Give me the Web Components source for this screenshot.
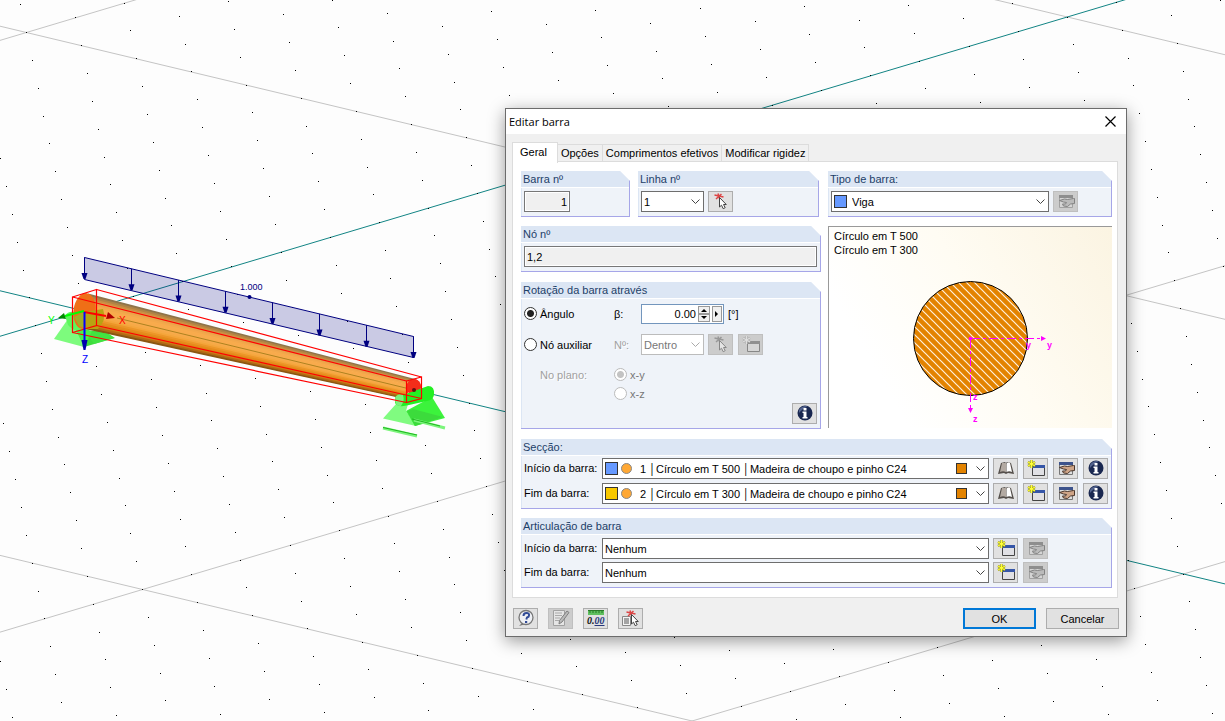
<!DOCTYPE html>
<html lang="pt">
<head>
<meta charset="utf-8">
<title>Editar barra</title>
<style>
html,body{height:100%}
body{margin:0;overflow:hidden;background:#fdfdfd;font:11px/14px "Liberation Sans",Arial,sans-serif;color:#000}
</style>
</head>
<body>
<work-plane></work-plane>
<member-dialog></member-dialog>
<script>
class BaseElement extends HTMLElement {
  render(html) {
    if (!this.shadowRoot) this.attachShadow({ mode: 'open' });
    this.shadowRoot.innerHTML = html;
  }
}

/* ---------- 3D model view ---------- */
class WorkPlane extends BaseElement {
  connectedCallback() {
    const o = [84.5, 311], a = [54.95, 13.15], b = [49.14, -14.7];
    const W = Math.max(innerWidth, 400), H = Math.max(innerHeight, 300);
    const at = (m, n) => [o[0] + m * a[0] + n * b[0], o[1] + m * a[1] + n * b[1]];
    let dots = '', lines = '';
    for (let m = -40; m <= 50; m++) for (let n = -40; n <= 50; n++) {
      const [x, y] = at(m, n);
      if (x > -1 && y > -1 && x < W && y < H) dots += `M${Math.floor(x)} ${Math.floor(y)}h1v1h-1z`;
    }
    const seg = (p, q, c) => `<path d="M${p}L${q}" stroke="${c}"/>`;
    for (const k of [-10, 10, 20]) {
      lines += seg(at(-60, k), at(60, k), '#c4c4c4') + seg(at(k, -60), at(k, 60), '#c4c4c4');
    }
    lines += seg(at(-60, 0), at(60, 0), '#128484') + seg(at(0, -60), at(0, 60), '#128484');

    const ramp = ['#8f744a','#b08445','#c98f45','#dc9a46','#eba34a','#f3a84c','#f8ab4d','#f8ab4d','#f8ab4d','#f7aa4b','#f6a945','#f4a43a','#ec9628','#e58c1c','#dd8518','#cc7a16','#b06a14','#8a5612'];
    const n = ramp.length;
    let beam = '';
    const p = (t, end) => end ? [415 - 10 * t, 379 + 20 * t] : [88 - 5 * t, 293.5 + 35 * t];
    ramp.forEach((c, i) => {
      const t = i / n, u = Math.min(1, (i + 1.6) / n);
      beam += `<path fill="${c}" d="M${p(t)}L${p(t,1)}L${p(u,1)}L${p(u)}z"/>`;
    });

    let arrows = '';
    for (let i = 0; i < 8; i++) {
      const x = 84.5 + 47 * i, y = 257.5 + 11.28 * i, e = y + 21.5;
      arrows += `<path d="M${x} ${y}V${e - 3}" stroke="#000080"/><path d="M${x - 3} ${e - 6}h6l-2 6h-2z" fill="#000080"/>`;
    }
    this.render(`<style>
      :host{display:block;position:absolute;inset:0;overflow:hidden}
      svg{display:block;width:100%;height:100%}
      text{font:10px "Liberation Sans",Arial,sans-serif}
    </style>
    <svg fill="none" aria-label="Modelo">
      ${lines}<path d="${dots}" fill="#000"/>
      <path d="M54 339L68 319L92 322L84 347z" fill="#7dfb7d"/>
      <path d="M84 347L77 330L104 331L115 338z" fill="#3ddc3d"/>
      <path d="M65 316q3-5 9-4l8 2v18q-9-1-14-7z" fill="#5cf75c"/>
      ${beam}
      <ellipse cx="84.500" cy="311" rx="11" ry="18" fill="#ef6f17" transform="rotate(8 84.500 311)"/>
      <path d="M84 312L103 309Q107 320 98 329L86 329z" fill="#b8a312"/>
      <path d="M74 317L84 312V328L79 326z" fill="#a3ae25"/>
      <path d="M84 330L109 334L114 338L94 344z" fill="#42e442" opacity=".85"/>
      <path d="M76 330L92 331L84 347z" fill="#49f349"/>
      <path d="M117 318L414 390" stroke="#ad821f"/>
      <path d="M383 418.500L396 404L409 401L406 411L416 426z" fill="#80fb80"/>
      <path d="M406 411L432 397L445 418L415 426z" fill="#3cf33c"/>
      <path d="M407 411L413 409L443 417L415 426z" fill="#3cdb3c"/>
      <ellipse cx="414" cy="387" rx="7" ry="8" fill="#f42d1a"/>
      <path d="M395 398Q397 393 403 395L428 386Q435 386 434 395Q433 400 427 401L409 405Q398 408 395 403z" fill="#23f023"/>
      <path d="M395 398Q397 393 403 395Q405 401 401 406Q395 407 395 398z" fill="#7cf07c"/>
      <path d="M407 384q3-5 8-5q6 2 6 9l-14 5z" fill="#f42d1a"/>
      <circle cx="414" cy="390" r="2" fill="#601010"/>
      <path d="M383 428L417 436M414 420L445 428" stroke="#7cf57c" stroke-width="3"/>
      <path d="M383 427.500L417 435M412 419L440 426" stroke="#20b820"/>
      <path d="M84.500 257.500L413.500 336.500V357.500L84.500 279.500z" fill="#000080" fill-opacity=".2" stroke="#000080"/>
      ${arrows}
      <circle cx="249.500" cy="297" r="2" fill="#000080"/>
      <text x="240" y="290" fill="#000080" style="font-size:9px">1.000</text>
      <g stroke="#f00" stroke-width="1.200">
        <path d="M72.500 297L96.500 289.500V325.500L72.500 332.500zM406.500 381L421.500 377V398.500L406.500 402.500z"/>
        <path d="M72.500 297L406.500 381M96.500 289.500L421.500 377M96.500 325.500L421.500 398.500M72.500 332.500L406.500 402.500"/>
      </g>
      <path d="M84 312L106 316" stroke="#f00" stroke-width="2"/><path d="M108 312L115 318L106 319z" fill="#b00000"/>
      <path d="M84 311L65 316" stroke="#0f0" stroke-width="2"/><path d="M58 318L64 313L66 319z" fill="#008c00"/>
      <path d="M84.500 312V343" stroke="#00f" stroke-width="2"/><path d="M81.500 340h6l-2 10h-2z" fill="#0000b0"/>
      <text x="119" y="324" fill="#f00">X</text>
      <text x="48" y="324" fill="#0f0">Y</text>
      <text x="82" y="363" fill="#00f">Z</text>
    </svg>`);
  }
}
customElements.define('work-plane', WorkPlane);

/* ---------- icons ---------- */
const CURSOR = '<path d="M7.500 4.500V14l2-1.800 1.700 3.500 2-1-1.700-3.200h2.800z" fill="#fff" stroke="#444"/>';
const STAR = '<path d="M2.500 2l9 2M4 6l5.500-5M6 .5l1.500 5" stroke="#dc4646" stroke-width="1.500"/>';
const ICONS = {
  pick: STAR + CURSOR,
  pickcopy: '<path d="M.5 6.500h8v9h-8z" fill="#f4f4f4" stroke="#888"/><path d="M2 9h5M2 11h5M2 13h5" stroke="#555"/><g transform="translate(2 0)">' + STAR + CURSOR + '</g>',
  create: '<path d="M5.500 6.500h12v9h-12z" fill="#e0e0e4" stroke="#444"/><path d="M5 5h13v3H5z" fill="#3656a8"/><path d="M4.500 0v8M1 2l7 4M8 2L1 6" stroke="#8b8b00" stroke-width="2.200"/><path d="M4.500 0v8M1 2l7 4M8 2L1 6" stroke="#ffff38" stroke-width="1.300"/>',
  edit: '<path d="M2.500 2.500h13v12h-13z" fill="#dedede" stroke="#777"/><path d="M2 2h14v3H2z" fill="#3d538c"/><path d="M2.500 7.500l5-1.500 3 .5 6-1h1v5l-4 .5-3 2.500-4-.5-1-2h3l1-1.500-3-.5z" fill="#cfa588" stroke="#4a362c"/>',
  book: '<path d="M1 14L4 3l4-1 1 1 1-1 4 1 3 11-6-1-2 1-2-1z" fill="#55504c"/><path d="M3 12L5 3l4 0v9q-3-1.500-6 0z" fill="#b3aaa2"/><path d="M9.500 12V3.500Q11 2 13 3l2 9q-3-1.500-5.500 0z" fill="#fff"/>',
  info: '<circle cx="9" cy="8" r="7.500" fill="#192750"/><path d="M3 5a7 7 0 0 1 9-3.500Q7 3 3 8z" fill="#6b7da8" opacity=".7"/><path d="M7.500 3h3v2.500h-3zM6.500 6.500h4V12h1v1.500h-5V12h1V8h-1z" fill="#fff"/>',
  help: '<path d="M5 13l-3 3 7-2z" fill="#777"/><circle cx="9" cy="7.500" r="7" fill="#eef0f5" stroke="#777" stroke-width="1.300"/><path d="M6.500 6q0-3 3-3t2.500 2.500q0 1.500-2 2L9.300 9.500" stroke="#304a96" stroke-width="2" fill="none"/><path d="M8 11h2.200v2H8z" fill="#304a96"/>',
  note: '<path d="M1.500.5h11v15h-11z" fill="#fff" stroke="#777"/><path d="M3 3h7M3 5.500h7M3 8h5M3 10.500h4" stroke="#888"/><path d="M15 1l2 1.500L10 12l-3 2 .5-3.500z" fill="#aaa" stroke="#333"/>',
  units: '<path d="M1 0h16v5H1z" fill="#5fc05f"/><path d="M1 .5h16M3 1v2M6 1v2M9 1v2M12 1v2M15 1v2" stroke="#287b28"/><text x="0" y="14" font-family="Liberation Serif" font-size="10" font-style="italic" font-weight="700" fill="#111">0.<tspan fill="#26377a" text-decoration="underline">00</tspan></text>'
};
class IconButton extends BaseElement {
  connectedCallback() {
    const off = this.hasAttribute('off');
    this.render(`<style>
      :host{display:block;flex:none;width:25px;height:21px}
      button{display:flex;align-items:center;justify-content:center;width:100%;height:100%;padding:0;margin:0;background:#e1e1e1;border:1px solid #adadad;border-radius:0}
      button:disabled{background:#ccc;border-color:#bfbfbf}
      button:disabled svg{filter:grayscale(1);opacity:.5}
      svg{width:18px;height:17px;overflow:visible}
    </style><button type="button" ${off ? 'disabled' : ''} aria-label="${this.getAttribute('label')}"><svg viewBox="0 0 18 17" fill="none">${ICONS[this.getAttribute('icon')]}</svg></button>`);
  }
}
customElements.define('icon-button', IconButton);

/* ---------- drop-down, optionally with a leading label and colour marks ---------- */
class ComboField extends BaseElement {
  connectedCallback() {
    const g = k => this.getAttribute(k), has = k => this.hasAttribute(k);
    this.render(`<style>
      :host{display:flex;flex:1;min-width:0;height:21px}
      label{flex:none;width:78px;line-height:20px}
      .box{position:relative;flex:1;min-width:0}
      select{appearance:none;box-sizing:border-box;width:100%;height:21px;margin:0;padding:0 20px 0 2px;border:1px solid #6e6e6e;border-radius:0;background:#fff;color:#000;font:inherit}
      :host([swatch]) select{padding-left:20px}
      :host([dot]) select{padding-left:37px}
      select:disabled{border-color:#bcbcbc;color:#777;opacity:1}
      svg,i{position:absolute;pointer-events:none}
      svg{right:4px;top:7px;width:9px;height:7px}
      i{box-sizing:border-box;top:4px;height:13px;width:13px;border:1px solid #333}
      .swatch{left:3px}.dot{left:19px;top:5px;width:11px;height:11px;border-color:#888;border-radius:50%;background:#ffa834}
      .end{right:22px;top:5px;width:11px;height:11px;background:#e38300}
    </style>
    ${has('label') ? `<label for="s">${g('label')}</label>` : ''}
    <div class="box"><select id="s" ${has('label') ? '' : `aria-label="${g('name')}"`} ${has('off') ? 'disabled' : ''}><option>${g('value')}</option></select>
    ${has('swatch') ? `<i class="swatch" style="background:${g('swatch')}"></i>` : ''}${has('dot') ? '<i class="dot"></i><i class="end"></i>' : ''}
    <svg viewBox="0 0 9 7" fill="none"><path d="M.5 1.500l4 4 4-4" stroke="${has('off') ? '#aaa' : '#444'}"/></svg></div>`);
  }
}
customElements.define('combo-field', ComboField);

/* ---------- titled group ---------- */
class GroupBox extends BaseElement {
  connectedCallback() {
    this.render(`<style>
      :host{display:block;box-sizing:border-box;min-width:0;background:#eff3f9;border-right:1px solid #a6a6e8;border-bottom:1px solid #a6a6e8;clip-path:polygon(0 0,calc(100% - 10px) 0,100% 10px,100% 100%,0 100%)}
      h2{margin:0;padding:0 2px;height:16px;font:inherit;line-height:17px;color:#1d4068;background:#dce6f4;border-bottom:1px solid #fff}
      .body{padding:3px 3px 4px 2px;border-left:1px solid #dce6f4}
    </style><h2>${this.getAttribute('heading')}</h2><div class="body" part="body"><slot></slot></div>`);
  }
}
customElements.define('group-box', GroupBox);

class ReadonlyField extends BaseElement {
  connectedCallback() {
    this.render(`<style>
      :host{display:block}
      input{display:block;box-sizing:border-box;width:100%;height:21px;margin:0;padding:0 2px;border:1px solid #777;box-shadow:inset 0 0 0 1px #fff;background:#f0f0f0;color:#000;font:inherit;text-align:inherit}
    </style><input readonly aria-label="${this.getAttribute('label')}" value="${this.getAttribute('value')}">`);
  }
}
customElements.define('readonly-field', ReadonlyField);

/* ---------- rotation settings ---------- */
class RotationForm extends BaseElement {
  connectedCallback() {
    this.render(`<style>
      :host{display:grid;grid-template-columns:90px 27px 1fr;grid-template-rows:31px 31px 19px 19px 21px;padding-top:1px}
      label,.cell{display:flex;align-items:center;height:21px;white-space:nowrap}
      label.low,.cell.low{height:19px}
      label{gap:3px}
      .plane{grid-column:2/-1}
      input[type=radio]{appearance:none;box-sizing:border-box;width:13px;height:13px;margin:0;border:1px solid #333;border-radius:50%;background:#fff}
      input[type=radio]:checked{background:radial-gradient(circle,#222 0 3px,#fff 4px)}
      input[type=radio]:disabled{border-color:#bbb}
      input[type=radio]:checked:disabled{background:radial-gradient(circle,#c3c3c3 0 3px,#fff 4px)}
      .off{color:#777}.faint{color:#a0a0a0;text-shadow:1px 1px #fff}
      .indent{padding-left:16px}
      .tools{gap:4px}
      .pair{display:flex;gap:5px}
      .spin{display:flex;box-sizing:border-box;width:83px;height:20px;padding:1px;border:1px solid #7396bd;background:#fff}
      .spin input{flex:1;min-width:0;padding:0 2px 0 0;border:0;background:none;font:inherit;text-align:right}
      .spin button{display:flex;align-items:center;justify-content:center;box-sizing:border-box;margin:0;padding:0;border:1px solid #999;background:#f0f0f0;width:12px}
      .steps{display:flex;flex-direction:column;width:12px;margin-right:2px}
      .steps button{height:8px}
      .spin .more{width:10px}
      combo-field{flex:none;width:63px}
      .info{grid-column:1/-1;justify-self:end}
    </style>
    <label><input type="radio" name="mode" checked>Ângulo</label>
    <label for="beta">β:</label>
    <div class="cell tools"><div class="spin"><input id="beta" value="0.00"><div class="steps">
      <button type="button" aria-label="Mais"><svg width="6" height="4"><path d="M0 4l3-3 3 3z"/></svg></button>
      <button type="button" aria-label="Menos"><svg width="6" height="4"><path d="M0 0l3 3 3-3z"/></svg></button></div>
      <button type="button" class="more" aria-label="Valores"><svg width="4" height="6"><path d="M0 0l3 3-3 3z"/></svg></button></div><span>[°]</span></div>
    <label><input type="radio" name="mode">Nó auxiliar</label>
    <span class="cell faint">Nº:</span>
    <div class="cell tools"><combo-field name="Nó auxiliar" value="Dentro" off></combo-field><div class="pair"><icon-button icon="pick" label="Selecionar nó" off></icon-button><icon-button icon="create" label="Novo nó" off></icon-button></div></div>
    <span class="cell low indent faint">No plano:</span>
    <label class="plane low off"><input type="radio" name="plane" checked disabled>x-y</label>
    <label class="plane low off"><input type="radio" name="plane" disabled>x-z</label>
    <icon-button class="info" icon="info" label="Informação"></icon-button>`);
  }
}
customElements.define('rotation-form', RotationForm);

/* ---------- cross-section preview ---------- */
class SectionPreview extends BaseElement {
  connectedCallback() {
    this.render(`<style>
      :host{display:block;box-sizing:border-box;overflow:hidden;border-left:1px solid #999;border-top:1px solid #999;background:linear-gradient(60deg,#fff 20%,#fffcf3 55%,#fbf4e2)}
      p{margin:0 0 0 5px}
      .text{padding-top:2px;height:28px}
      svg{display:block;margin:0 auto;width:170px;height:170px}
      text{font:700 9px "Liberation Sans",Arial,sans-serif;fill:#f0f}
    </style><div class="text"><p>Círculo em T 500</p><p>Círculo em T 300</p></div>
    <svg viewBox="1 0 170 170" fill="none" aria-label="Secção circular">
      <defs><pattern id="h" width="8" height="8" patternUnits="userSpaceOnUse"><rect width="8" height="8" fill="#e38300"/><path d="M-1-1L9 9M-1 7L1 9M7-1L9 1" stroke="#fff0dc" stroke-width="1.200"/></pattern></defs>
      <circle cx="85.500" cy="81.500" r="57" fill="url(#h)" stroke="#000"/>
      <path d="M86 81.500H156" stroke="#f0f" stroke-dasharray="9 3 3 3"/><path d="M85.500 82V152" stroke="#f0f" stroke-dasharray="9 3 3 3"/>
      <circle cx="85.500" cy="81.500" r="1.800" fill="#f0f"/>
      <path d="M156 79l5 2.500-5 2.500zM83 151h5l-2.500 5z" fill="#f0f"/>
      <text x="141" y="91">y</text><text x="162" y="91">y</text><text x="88" y="143">z</text><text x="88" y="165">z</text>
    </svg>`);
  }
}
customElements.define('section-preview', SectionPreview);

/* ---------- tabs ---------- */
class TabStrip extends BaseElement {
  connectedCallback() {
    const tabs = this.getAttribute('tabs').split('|');
    this.render(`<style>
      :host{display:flex;align-items:flex-end;height:20px;position:relative;margin-bottom:-1px}
      button{box-sizing:border-box;height:18px;margin:0;padding:0 3px;border:1px solid #dcdcdc;border-left:0;border-radius:0;background:#f0f0f0;color:#000;font:inherit}
      button[aria-selected=true]{height:21px;margin-bottom:-1px;padding:0 10px 2px 7px;border-left:1px solid #dcdcdc;border-bottom:0;background:#fff}
    </style>${tabs.map((t, i) => `<button type="button" role="tab" aria-selected="${i === 0}">${t}</button>`).join('')}`);
    this.setAttribute('role', 'tablist');
  }
}
customElements.define('tab-strip', TabStrip);

/* ---------- window frame ---------- */
class WindowFrame extends BaseElement {
  connectedCallback() {
    this.render(`<style>
      :host{display:block;box-sizing:border-box;border:1px solid #6c6c6c;background:#f0f0f0;box-shadow:0 4px 16px rgba(0,0,0,.4)}
      header{display:flex;align-items:center;justify-content:space-between;height:25px;padding:0 10px 0 3px;background:#fff}
      h1{margin:0;font:11px/16px "Open Sans","Noto Sans",sans-serif}
      button{display:flex;padding:0;margin:0;border:0;background:none}
      main{padding:8px 8px 0 6px}
      footer{padding:10px 7px 7px}
    </style><header><h1>${this.getAttribute('heading')}</h1><button type="button" aria-label="Fechar"><svg width="11" height="11" fill="none"><path d="M.5.5l10 10M10.500.5l-10 10" stroke="#000" stroke-width="1.200"/></svg></button></header>
    <main><slot></slot></main><footer><slot name="footer"></slot></footer>`);
  }
}
customElements.define('window-frame', WindowFrame);

class MemberDialog extends BaseElement {
  connectedCallback() {
    const four = `<icon-button icon="book" label="Biblioteca"></icon-button><icon-button icon="create" label="Nova secção"></icon-button><icon-button icon="edit" label="Editar secção"></icon-button><icon-button icon="info" label="Informação"></icon-button>`;
    const two = `<icon-button icon="create" label="Nova articulação"></icon-button><icon-button icon="edit" label="Editar articulação" off></icon-button>`;
    this.render(`<style>
      :host{display:block;position:absolute;left:505px;top:108px;width:622px}
      .panel{display:grid;grid-template-columns:300px 1fr;column-gap:7px;row-gap:9px;padding:9px 5px 9px 8px;border:1px solid #dcdcdc;background:#fff}
      .numbers{display:grid;grid-template-columns:109px 1fr;gap:8px;padding-right:2px}
      .stack{display:grid;gap:10px;padding-bottom:1px}
      section-preview{margin-bottom:2px}
      .full{grid-column:1/-1}
      .row{display:flex;gap:4px}
      .row+.row{margin-top:4px}
      .joint .row+.row{margin-top:3px}
      .section::part(body){padding-top:2px}
      .tools{display:flex;gap:5px;width:115px;flex:none}
      .number{width:46px;text-align:right}
      .line{flex:none;width:63px}
      .type{flex:none;width:218px}
      .foot{display:flex;gap:10px}
      .foot .push{margin-left:auto}
      .foot button{box-sizing:border-box;width:73px;height:21px;margin-right:0;padding:0;border:1px solid #adadad;border-radius:0;background:#e1e1e1;font:inherit;color:#000}
      .foot .push{border:2px solid #0078d7}
    </style>
    <window-frame heading="Editar barra" role="dialog" aria-label="Editar barra">
      <tab-strip tabs="Geral|Opções|Comprimentos efetivos|Modificar rigidez"></tab-strip>
      <div class="panel">
        <div class="numbers">
          <group-box heading="Barra nº"><readonly-field class="number" label="Barra nº" value="1"></readonly-field></group-box>
          <group-box heading="Linha nº"><div class="row"><combo-field class="line" name="Linha nº" value="1"></combo-field><icon-button icon="pick" label="Selecionar linha"></icon-button></div></group-box>
        </div>
        <group-box heading="Tipo de barra:"><div class="row"><combo-field class="type" name="Tipo de barra" value="Viga" swatch="#6699ff"></combo-field><icon-button icon="edit" label="Editar tipo" off></icon-button></div></group-box>
        <div class="stack">
          <group-box heading="Nó nº"><readonly-field label="Nó nº" value="1,2"></readonly-field></group-box>
          <group-box heading="Rotação da barra através"><rotation-form></rotation-form></group-box>
        </div>
        <section-preview></section-preview>
        <group-box class="full section" heading="Secção:">
          <div class="row"><combo-field label="Início da barra:" swatch="#6699ff" dot value="1 │Círculo em T 500 │Madeira de choupo e pinho C24"></combo-field><div class="tools">${four}</div></div>
          <div class="row"><combo-field label="Fim da barra:" swatch="#f8c800" dot value="2 │Círculo em T 300 │Madeira de choupo e pinho C24"></combo-field><div class="tools">${four}</div></div>
        </group-box>
        <group-box class="full joint" heading="Articulação de barra">
          <div class="row"><combo-field label="Início da barra:" value="Nenhum"></combo-field><div class="tools">${two}</div></div>
          <div class="row"><combo-field label="Fim da barra:" value="Nenhum"></combo-field><div class="tools">${two}</div></div>
        </group-box>
      </div>
      <div class="foot" slot="footer">
        <icon-button icon="help" label="Ajuda"></icon-button><icon-button icon="note" label="Comentário" off></icon-button><icon-button icon="units" label="Unidades"></icon-button><icon-button icon="pickcopy" label="Copiar de barra"></icon-button>
        <button type="button" class="push">OK</button><button type="button">Cancelar</button>
      </div>
    </window-frame>`);
  }
}
customElements.define('member-dialog', MemberDialog);
</script>
</body>
</html>
